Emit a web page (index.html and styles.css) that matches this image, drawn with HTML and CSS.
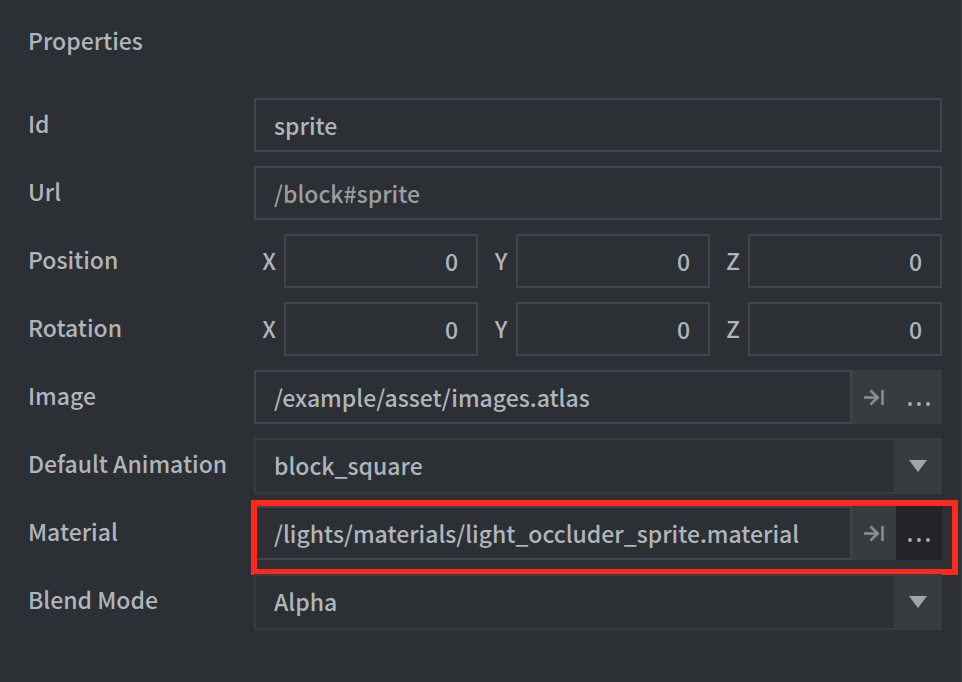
FILE: index.html
```html
<!DOCTYPE html>
<html lang="en">
<head>
<meta charset="utf-8">
<title>Properties</title>
<link rel="stylesheet" href="styles.css">
</head>
<body>
<main class="panel">
  <h1 class="title">Properties</h1>
  <form class="form">
    <div class="row">
      <label class="name" for="id">Id</label>
      <input class="field" id="id" type="text" value="sprite">
    </div>
    <div class="row">
      <label class="name" for="url">Url</label>
      <input class="field readonly" id="url" type="text" value="/block#sprite" readonly>
    </div>
    <div class="row" role="group" aria-labelledby="position">
      <span class="name" id="position">Position</span>
      <div class="vector">
        <div class="axis"><label for="px">X</label><input class="field number" id="px" type="text" value="0"></div>
        <div class="axis"><label for="py">Y</label><input class="field number" id="py" type="text" value="0"></div>
        <div class="axis"><label for="pz">Z</label><input class="field number" id="pz" type="text" value="0"></div>
      </div>
    </div>
    <div class="row" role="group" aria-labelledby="rotation">
      <span class="name" id="rotation">Rotation</span>
      <div class="vector">
        <div class="axis"><label for="rx">X</label><input class="field number" id="rx" type="text" value="0"></div>
        <div class="axis"><label for="ry">Y</label><input class="field number" id="ry" type="text" value="0"></div>
        <div class="axis"><label for="rz">Z</label><input class="field number" id="rz" type="text" value="0"></div>
      </div>
    </div>
    <div class="row">
      <label class="name" for="image">Image</label>
      <div class="resource">
        <input class="field" id="image" type="text" value="/example/asset/images.atlas">
        <button class="btn open" type="button" aria-label="Open image">
          <svg width="20" height="18" viewBox="0 0 20 18"><path d="M0 9.500H14M6.500 2.500L13.700 9.500L6.500 16.500"/><path d="M18.500 2V17"/></svg>
        </button>
        <button class="btn browse" type="button" aria-label="Browse image">
          <svg width="22" height="4" viewBox="0 0 22 4"><circle cx="2" cy="2" r="1.900"/><circle cx="11" cy="2" r="1.900"/><circle cx="20" cy="2" r="1.900"/></svg>
        </button>
      </div>
    </div>
    <div class="row">
      <label class="name" for="animation">Default Animation</label>
      <div class="choice">
        <select id="animation"><option>block_square</option></select>
        <span class="arrow"><svg width="18" height="12" viewBox="0 0 18 12"><path d="M0 0H18L9 12Z"/></svg></span>
      </div>
    </div>
    <div class="row">
      <label class="name" for="material">Material</label>
      <div class="resource marked">
        <input class="field" id="material" type="text" value="/lights/materials/light_occluder_sprite.material">
        <button class="btn open" type="button" aria-label="Open material">
          <svg width="20" height="18" viewBox="0 0 20 18"><path d="M0 9.500H14M6.500 2.500L13.700 9.500L6.500 16.500"/><path d="M18.500 2V17"/></svg>
        </button>
        <button class="btn browse pressed" type="button" aria-label="Browse material">
          <svg width="22" height="4" viewBox="0 0 22 4"><circle cx="2" cy="2" r="1.900"/><circle cx="11" cy="2" r="1.900"/><circle cx="20" cy="2" r="1.900"/></svg>
        </button>
      </div>
    </div>
    <div class="row">
      <label class="name" for="blend">Blend Mode</label>
      <div class="choice">
        <select id="blend"><option>Alpha</option></select>
        <span class="arrow"><svg width="18" height="12" viewBox="0 0 18 12"><path d="M0 0H18L9 12Z"/></svg></span>
      </div>
    </div>
  </form>
</main>
</body>
</html>
```
FILE: styles.css
```css
* { box-sizing: border-box; }

body {
  margin: 0;
  background: #2c2f33;
  color: #b0b5bd;
  font: 500 23px/34px "Noto Sans CJK SC", "Noto Sans", sans-serif;
}

.panel {
  min-height: 100vh;
  padding: 23px 19px 0 28px;
  border-right: 1px solid #383b40;
}

.title { margin: 0; font-size: inherit; font-weight: inherit; }

.form {
  display: grid;
  grid-auto-rows: 68px;
  padding-top: 41px;
}

.row {
  display: grid;
  grid-template-columns: 226px minmax(0, 1fr);
  align-items: start;
}

.name { padding-top: 8px; white-space: nowrap; }

input, select, button {
  margin: 0;
  border-radius: 0;
  color: inherit;
  font: inherit;
  outline: none;
}

.field {
  width: 100%;
  min-width: 0;
  height: 54px;
  padding: 0 18px 1px;
  border: 2px solid #41444c;
  background: #2c2f33;
}

.readonly { color: #9b9da1; }

.number { text-align: right; }

.vector {
  display: grid;
  grid-template-columns: repeat(3, minmax(0, 1fr));
  gap: 8px;
}

.axis {
  display: grid;
  grid-template-columns: 30px minmax(0, 1fr);
  align-items: center;
}

.axis label { padding-bottom: 2px; text-align: center; }

.resource { position: relative; display: flex; }

.btn {
  display: flex;
  flex: none;
  height: 54px;
  padding: 0;
  border: 0;
  background: #383c3f;
}

.open {
  align-items: center;
  justify-content: center;
  width: 44px;
  fill: none;
  stroke: #8b8e93;
  stroke-width: 2.500;
}

.browse {
  align-items: flex-end;
  justify-content: center;
  width: 46px;
  padding-bottom: 18px;
  fill: #aeb2b8;
}

.pressed { background: #222428; }

.choice { position: relative; display: flex; }

.choice select {
  width: 100%;
  height: 56px;
  padding: 0 60px 2px 18px;
  border: 2px solid #383b3f;
  background: #2c2f33;
  appearance: none;
}

.arrow {
  position: absolute;
  inset: 0 0 0 auto;
  display: flex;
  align-items: center;
  justify-content: center;
  width: 48px;
  background: #383c3f;
  fill: #a0a4ab;
  pointer-events: none;
}

.marked::after {
  content: "";
  position: absolute;
  inset: -6px -16px -15px -3px;
  border: 6px solid #fc291c;
  pointer-events: none;
}
```
